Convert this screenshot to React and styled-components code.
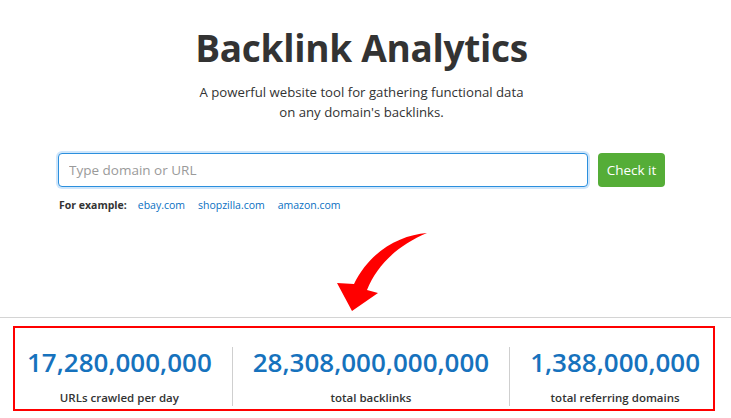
import React from "react";
import styled, { createGlobalStyle } from "styled-components";

const GlobalStyle = createGlobalStyle`
  body {
    margin: 0;
    background: #fff;
    font-family: "Open Sans", "Noto Sans", sans-serif;
    color: #333;
  }
`;

const stats = [
  { value: "17,280,000,000", label: "URLs crawled per day" },
  { value: "28,308,000,000,000", label: "total backlinks" },
  { value: "1,388,000,000", label: "total referring domains" },
];

const examples = ["ebay.com", "shopzilla.com", "amazon.com"];

const App = () => {
  return (
    <Page>
      <GlobalStyle />
      <Hero>
        <Title>Backlink Analytics</Title>
        <Subtitle>
          A powerful website tool for gathering functional data
          <br />
          on any domain's backlinks.
        </Subtitle>
        <SearchForm>
          <SearchInput type="text" placeholder="Type domain or URL" />
          <CheckButton type="button">Check it</CheckButton>
        </SearchForm>
        <Examples>
          <ExamplesLabel>For example:</ExamplesLabel>
          {examples.map((e) => (
            <ExampleLink key={e} href="#">
              {e}
            </ExampleLink>
          ))}
        </Examples>
      </Hero>
      <ArrowRow>
        <svg width="100" height="90" viewBox="0 0 100 90">
          <path
            d="M97 6 C70 8 40 24 24 57 L7 56 L22 84 L48 66 L37 63 C47 38 68 18 97 6 Z"
            fill="#ff0000"
          />
        </svg>
      </ArrowRow>
      <Divider />
      <StatsBox>
        {stats.map((s, i) => (
          <Stat key={s.label} $pos={i}>
            <StatValue>{s.value}</StatValue>
            <StatLabel>{s.label}</StatLabel>
          </Stat>
        ))}
      </StatsBox>
    </Page>
  );
};

const Page = styled.div`
  width: 731px;
  height: 418px;
  overflow: hidden;
`;

const Hero = styled.div`
  width: 607px;
  margin: 0 0 0 58px;
  padding-top: 26px;
  display: flex;
  flex-direction: column;
  align-items: center;
`;

const Title = styled.h1`
  margin: 0;
  font-size: 37px;
  line-height: 44px;
  font-weight: 700;
  color: #333;
  letter-spacing: -0.3px;
`;

const Subtitle = styled.p`
  margin: 12px 0 0;
  font-size: 13.2px;
  line-height: 20px;
  text-align: center;
  color: #333;
`;

const SearchForm = styled.div`
  display: flex;
  width: 100%;
  gap: 10px;
  margin-top: 31px;
`;

const SearchInput = styled.input`
  flex: 1;
  height: 34px;
  box-sizing: border-box;
  border: 1px solid #2b8fdd;
  border-radius: 4px;
  box-shadow: 0 0 0 2px #cfe6fb;
  padding: 0 10px;
  font-family: inherit;
  font-size: 13.5px;
  color: #333;
  outline: none;
  &::placeholder {
    color: #9a9a9a;
  }
`;

const CheckButton = styled.button`
  width: 67px;
  height: 34px;
  border: none;
  border-radius: 4px;
  background: #55ad37;
  color: #fff;
  font-family: inherit;
  font-size: 13.5px;
  padding: 0;
  cursor: pointer;
`;

const Examples = styled.div`
  display: flex;
  align-items: baseline;
  gap: 13px;
  width: 100%;
  margin-top: 10px;
  padding-left: 2px;
  font-size: 10.5px;
  line-height: 16px;
`;

const ExamplesLabel = styled.span`
  font-weight: 700;
  color: #333;
  margin-right: -2px;
`;

const ExampleLink = styled.a`
  color: #0a6fc2;
  text-decoration: none;
`;

const ArrowRow = styled.div`
  height: 104px;
  display: flex;
  align-items: flex-end;
  padding-left: 330px;
  box-sizing: border-box;
  svg {
    display: block;
  }
`;

const Divider = styled.div`
  height: 1px;
  background: #d4d4d4;
`;

const StatsBox = styled.div`
  margin: 8px 16px 0 13px;
  height: 85px;
  box-sizing: border-box;
  border: 2px solid #ff0000;
  display: flex;
  justify-content: space-between;
  padding: 19px 0 0;
`;

const Stat = styled.div`
  display: flex;
  flex-direction: column;
  align-items: center;
  padding: 0 ${(p) => (p.$pos === 2 ? "15px" : "20px")} 0
    ${(p) => (p.$pos === 0 ? "12px" : "20px")};
  border-left: ${(p) => (p.$pos === 0 ? "none" : "1px solid #cfcfcf")};
  height: 59px;
`;

const StatValue = styled.div`
  font-size: 26px;
  line-height: 30px;
  font-weight: 600;
  color: #1672bd;
`;

const StatLabel = styled.div`
  margin-top: 13px;
  font-size: 11.5px;
  line-height: 16px;
  font-weight: 600;
  color: #333;
`;

export default App;
